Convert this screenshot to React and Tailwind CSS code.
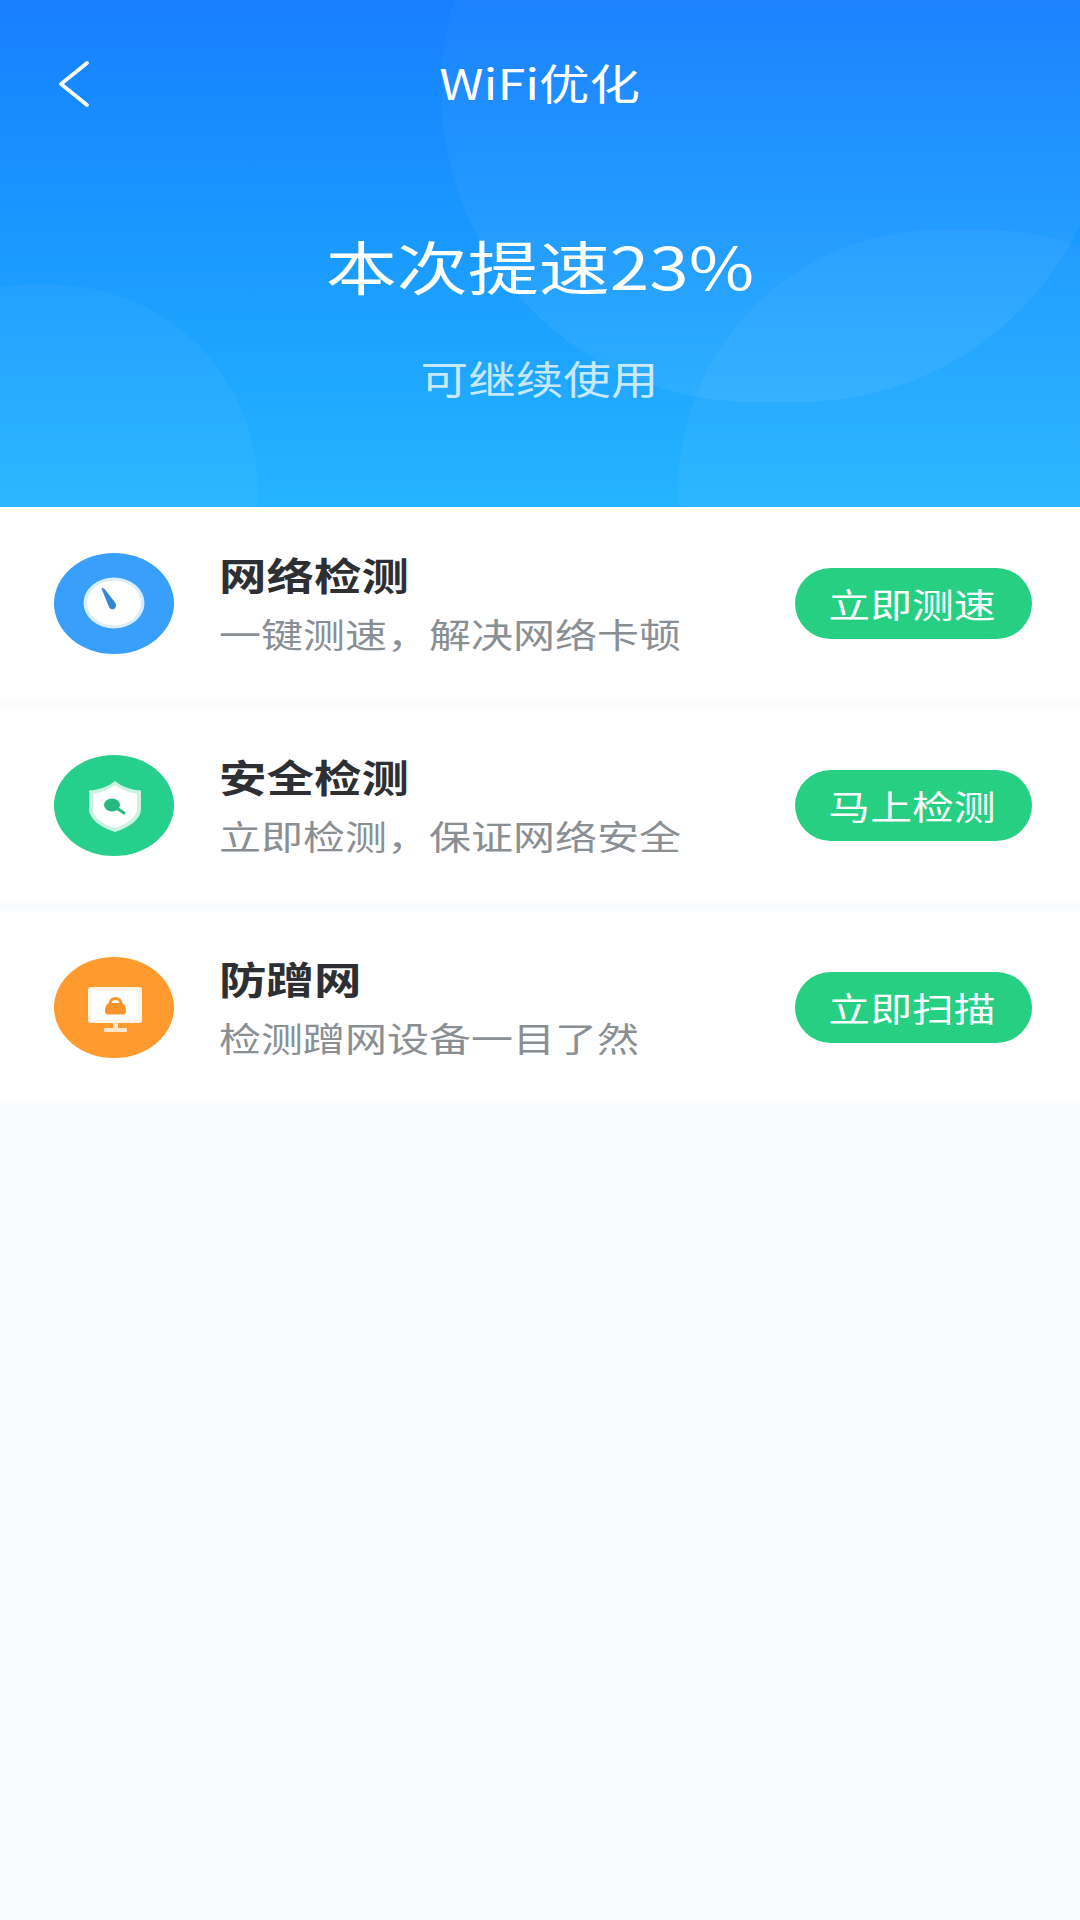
const font = { fontFamily: '"Noto Sans CJK SC", "Noto Sans", sans-serif' };

function SpeedIcon() {
  return (
    <svg width="120" height="101" viewBox="0 0 120 101" className="shrink-0">
      <ellipse cx="60" cy="50.5" rx="60" ry="50.5" fill="#389ffc" />
      <ellipse cx="60" cy="50" rx="30.5" ry="25.5" fill="#d8eefe" />
      <ellipse cx="60" cy="50" rx="27" ry="22.5" fill="#ffffff" />
      <path d="M47.5 35.5 Q49 34.5 50.5 36 L61.5 50 Q63 54 60 56 Q56.5 57 55 54 Z" fill="#3187d6" />
    </svg>
  );
}

function ShieldIcon() {
  return (
    <svg width="120" height="101" viewBox="0 0 120 101" className="shrink-0">
      <ellipse cx="60" cy="50.5" rx="60" ry="50.5" fill="#26d08c" />
      <path d="M61 26 C68 32 78 35 87 35.5 V54 C87 64 76 72 61 77 C46 72 35 64 35 54 V35.5 C44 35 54 32 61 26 Z" fill="#c9f3e2" />
      <path d="M61 30 C68 35 76 38 83 38.5 V54 C83 62 74 69 61 73 C48 69 39 62 39 54 V38.5 C46 38 54 35 61 30 Z" fill="#ffffff" />
      <ellipse cx="58" cy="50" rx="8" ry="6.5" fill="#25b980" />
      <path d="M64 54 L70 58" stroke="#25b980" strokeWidth="3" strokeLinecap="round" />
    </svg>
  );
}

function MonitorIcon() {
  return (
    <svg width="120" height="101" viewBox="0 0 120 101" className="shrink-0">
      <ellipse cx="60" cy="50.5" rx="60" ry="50.5" fill="#ff9b2e" />
      <rect x="34" y="30" width="54" height="36" rx="3" fill="#fff3e3" />
      <rect x="37.5" y="33.5" width="47" height="29" rx="1" fill="#ffffff" />
      <rect x="59" y="66" width="5" height="6" fill="#ffe6c8" />
      <rect x="50" y="71" width="23" height="4" rx="1" fill="#ffe6c8" />
      <path d="M56 47 C56 39.5 67 39.5 67 47" fill="none" stroke="#f7952b" strokeWidth="3" />
      <path d="M51 54 C51 49 53 46 56 46 H67 C70 46 72 49 72 54 C72 56.5 71 57.5 69 57.5 H54 C52 57.5 51 56.5 51 54 Z" fill="#f7952b" />
    </svg>
  );
}

const rows = [
  { icon: <SpeedIcon />, title: "网络检测", sub: "一键测速，解决网络卡顿", btn: "立即测速" },
  { icon: <ShieldIcon />, title: "安全检测", sub: "立即检测，保证网络安全", btn: "马上检测" },
  { icon: <MonitorIcon />, title: "防蹭网", sub: "检测蹭网设备一目了然", btn: "立即扫描" },
];

export default function App() {
  return (
    <div className="w-[1080px] h-[1920px] bg-[#f9fbfd] flex flex-col overflow-hidden" style={font}>
      <header className="relative h-[507px] shrink-0 overflow-hidden bg-gradient-to-b from-[#187fff] to-[#25b4ff] text-white">
        <div className="absolute left-[441px] top-[-222px] w-[670px] h-[624px] rounded-full bg-gradient-to-b from-white/0 to-white/[0.06]" />
        <div className="absolute left-[678px] top-[230px] w-[570px] h-[520px] rounded-full bg-white/[0.04]" />
        <div className="absolute left-[-178px] top-[285px] w-[436px] h-[410px] rounded-full bg-white/[0.04]" />
        <div className="relative flex flex-col items-center">
          <div className="w-full h-[60px] mt-[52px] px-[58px] grid grid-cols-[1fr_auto_1fr] items-center">
            <svg width="32" height="46" viewBox="0 0 32 46" fill="none" className="mt-[3px]">
              <path d="M29 2 L3 23 L29 44" stroke="#ffffff" strokeWidth="3.6" strokeLinecap="round" strokeLinejoin="round" />
            </svg>
            <div className="text-[42px] leading-[60px] scale-x-[1.2]">WiFi优化</div>
            <div />
          </div>
          <div className="mt-[123px] text-[58px] leading-[60px] scale-x-[1.225]">本次提速23%</div>
          <div className="mt-[60px] text-[39px] leading-[44px] text-white/75 scale-x-[1.22]">可继续使用</div>
        </div>
      </header>
      <main className="flex flex-col gap-[10px]">
        {rows.map((r) => (
          <div key={r.title} className="h-[192px] bg-white flex items-center pl-[54px] pr-[48px]">
            {r.icon}
            <div className="ml-[45px] pt-[2px] flex flex-col">
              <div className="text-[38px] leading-[59px] font-bold text-[#2d2f33] origin-left scale-x-[1.25] whitespace-nowrap">{r.title}</div>
              <div className="mt-[1px] text-[34px] leading-[60px] text-[#8a8f94] origin-left scale-x-[1.235] whitespace-nowrap">{r.sub}</div>
            </div>
            <div className="ml-auto w-[237px] h-[71px] rounded-full bg-[#27cf83] flex items-center justify-center pr-[3px] text-white">
              <span className="text-[34px] leading-[71px] scale-x-[1.23] whitespace-nowrap">{r.btn}</span>
            </div>
          </div>
        ))}
      </main>
    </div>
  );
}
